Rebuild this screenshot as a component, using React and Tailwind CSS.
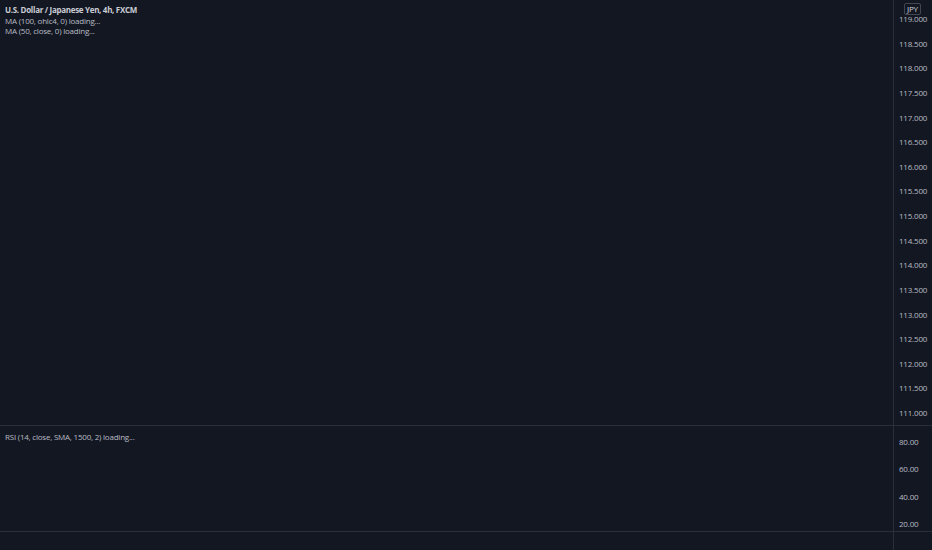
import React from 'react';

const precios = ['119.000', '118.500', '118.000', '117.500', '117.000', '116.500', '116.000', '115.500', '115.000', '114.500', '114.000', '113.500', '113.000', '112.500', '112.000', '111.500', '111.000'];
const rsi = ['80.00', '60.00', '40.00', '20.00'];

const App = () => {
  return (
    <div className="w-[932px] h-[550px] bg-[#131722] flex flex-col overflow-hidden text-[#b8bbc3]" style={{ fontFamily: '"Open Sans", "Noto Sans", sans-serif' }}>
      {/* Panel principal */}
      <div className="flex h-[426px] shrink-0 border-b border-[#2a2e39]">
        <div className="flex-1 border-r border-[#2a2e39] pl-[5px] pt-[5px] text-[8px] leading-[10.7px] tracking-[-0.22px]">
          <div className="font-bold text-[#c9ccd4] tracking-[-0.3px]">U.S. Dollar / Japanese Yen, 4h, FXCM</div>
          <div>MA (100, ohlc4, 0) loading...</div>
          <div>MA (50, close, 0) loading...</div>
        </div>
        <div className="w-[38px] relative flex flex-col pt-[6.7px] text-[8px] tracking-[-0.2px]">
          <div className="absolute top-[3px] left-[10px] h-[12px] px-[2px] rounded-[2px] border border-[#434651] bg-[#131722] text-[8px] leading-[10px] text-[#d1d4dc]">JPY</div>
          {precios.map((p) => (
            <div key={p} className="h-[24.625px] shrink-0 flex items-center pl-[5px]">{p}</div>
          ))}
        </div>
      </div>

      {/* Panel RSI */}
      <div className="flex h-[106px] shrink-0 border-b border-[#2a2e39]">
        <div className="flex-1 border-r border-[#2a2e39] pl-[5px] pt-[5px] text-[8px] leading-[11px] tracking-[-0.22px]">
          RSI (14, close, SMA, 1500, 2) loading...
        </div>
        <div className="w-[38px] flex flex-col pt-[2.4px] text-[8px] tracking-[-0.2px]">
          {rsi.map((r) => (
            <div key={r} className="h-[27.33px] shrink-0 flex items-center pl-[5px]">{r}</div>
          ))}
        </div>
      </div>

      <div className="flex flex-1">
        <div className="flex-1 border-r border-[#2a2e39]"></div>
        <div className="w-[38px]"></div>
      </div>
    </div>
  );
};

export default App;
